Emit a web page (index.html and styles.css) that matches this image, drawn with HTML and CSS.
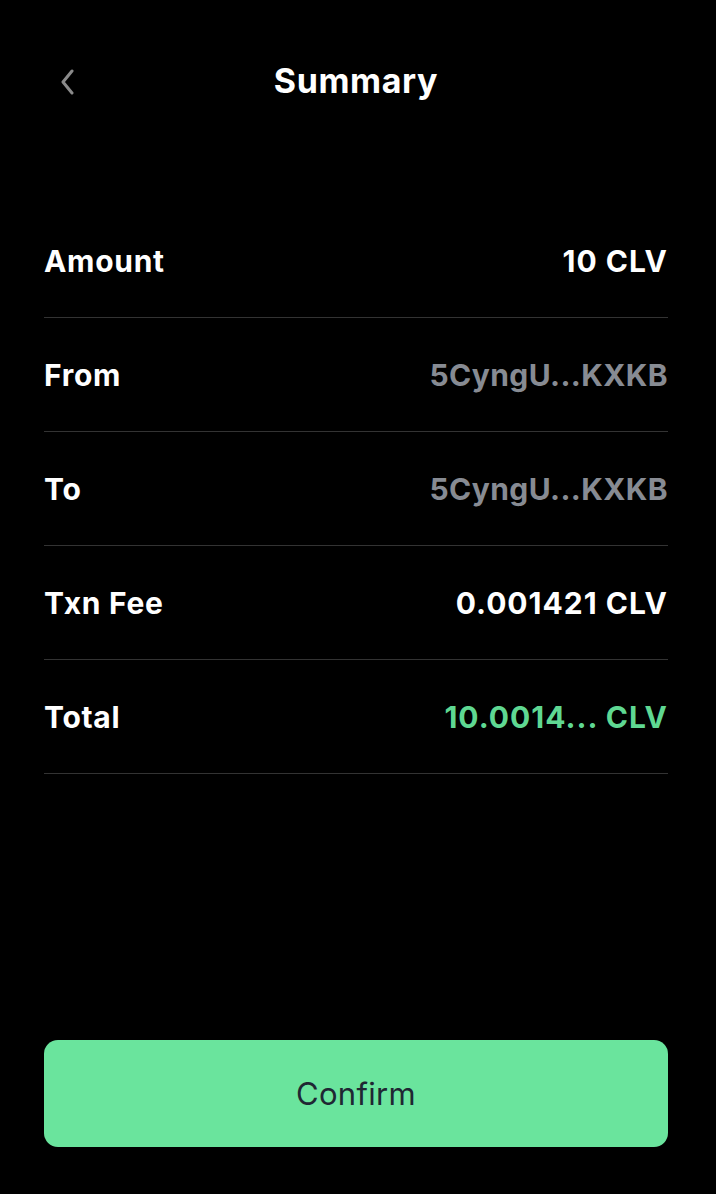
FILE: index.html
```html
<!DOCTYPE html>
<html>
<head>
<meta charset="utf-8">
<link rel="stylesheet" href="styles.css">
</head>
<body>
<div class="page">
  <header class="header">
    <button class="back" aria-label="Back">
      <svg width="18" height="26" viewBox="0 0 18 26"><path d="M13 2 L4 13 L13 24" fill="none" stroke="#8a8a8a" stroke-width="3" stroke-linecap="round" stroke-linejoin="round"/></svg>
    </button>
    <h1 class="title">Summary</h1>
  </header>
  <div class="rows">
    <div class="row"><span class="label">Amount</span><span class="value">10 CLV</span></div>
    <div class="row"><span class="label">From</span><span class="value muted">5CyngU...KXKB</span></div>
    <div class="row"><span class="label">To</span><span class="value muted">5CyngU...KXKB</span></div>
    <div class="row"><span class="label">Txn Fee</span><span class="value">0.001421 CLV</span></div>
    <div class="row"><span class="label">Total</span><span class="value green">10.0014... CLV</span></div>
  </div>
  <div class="spacer"></div>
  <button class="confirm">Confirm</button>
</div>
</body>
</html>
```
FILE: styles.css
```css
html, body {
  margin: 0;
  padding: 0;
  background: #000;
  height: 100%;
}
body {
  font-family: Inter, "Noto Sans", sans-serif;
  color: #fff;
}
.page {
  box-sizing: border-box;
  height: 1194px;
  padding: 0 48px 47px 44px;
  display: flex;
  flex-direction: column;
}
.header {
  position: relative;
  height: 164px;
  display: flex;
  justify-content: center;
  align-items: flex-start;
  padding-top: 58px;
  box-sizing: border-box;
}
.back {
  position: absolute;
  left: 15px;
  top: 69px;
  background: none;
  border: 0;
  padding: 0;
  display: flex;
}
.title {
  margin: 0 0 0 0;
  font-size: 34px;
  font-weight: 700;
  line-height: 46px;
  letter-spacing: 0.6px;
}
.rows {
  margin-top: 40px;
  display: flex;
  flex-direction: column;
}
.row {
  height: 114px;
  box-sizing: border-box;
  border-bottom: 1px solid #333;
  display: flex;
  justify-content: space-between;
  align-items: center;
  font-size: 30px;
  font-weight: 700;
  letter-spacing: 0.7px;
}
.value { letter-spacing: 1px; }
.value.muted { color: #878b93; letter-spacing: 0.4px; }
.value.green { color: #5fd892; }
.spacer { flex: 1; }
.confirm {
  height: 107px;
  border: 0;
  border-radius: 14px;
  background: #6ae49d;
  color: #1f2733;
  font-family: Inter, "Noto Sans", sans-serif;
  font-size: 31px;
  font-weight: 400;
  letter-spacing: 0.3px;
  width: 624px;
}
```
